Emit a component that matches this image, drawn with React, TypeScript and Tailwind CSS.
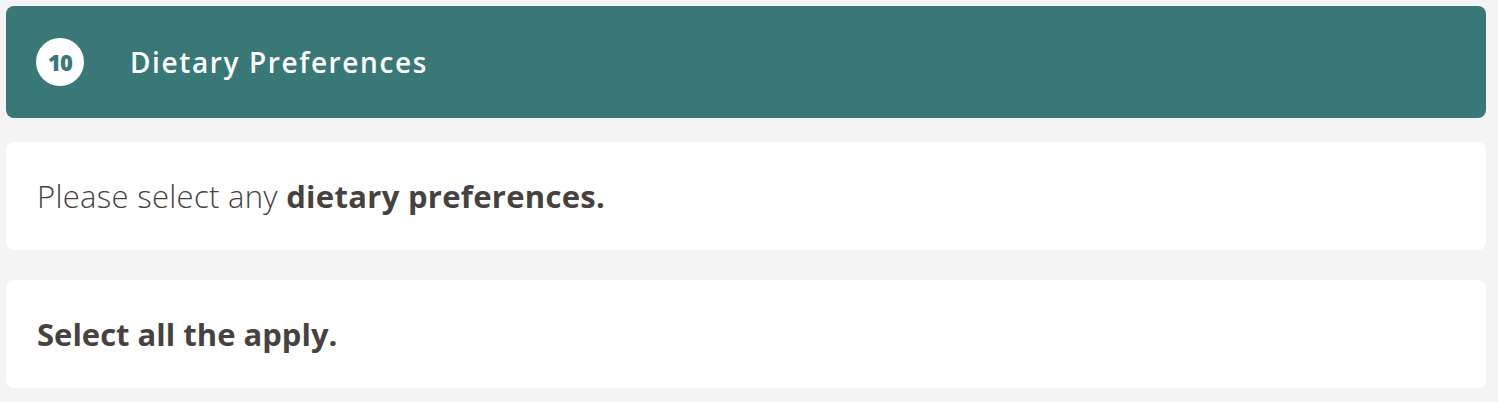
export default function App() {
  return (
    <div className="min-h-[402px] bg-[#f4f4f4] pb-[14px] pl-[6px] pr-[12px] pt-[6px] font-['Open_Sans',sans-serif] text-[#464240]">
      <header className="flex h-[112px] items-center rounded-[8px] bg-[#387876] pl-[30px]">
        <span className="flex h-12 w-12 items-center justify-center rounded-full bg-white text-[22px] font-extrabold tracking-[-1px] text-[#387876]">
          10
        </span>
        <h1 className="ml-[46px] text-[28px] font-semibold tracking-[1.6px] text-white">
          Dietary Preferences
        </h1>
      </header>

      <section className="mt-[24px] flex h-[108px] items-center rounded-[8px] bg-white px-[31px]">
        <p className="text-[31px] font-light tracking-[0.3px]">
          Please select any <span className="font-bold">dietary preferences.</span>
        </p>
      </section>

      <section className="mt-[30px] flex h-[108px] items-center rounded-[8px] bg-white px-[31px]">
        <p className="text-[31px] font-bold">Select all the apply.</p>
      </section>
    </div>
  )
}
